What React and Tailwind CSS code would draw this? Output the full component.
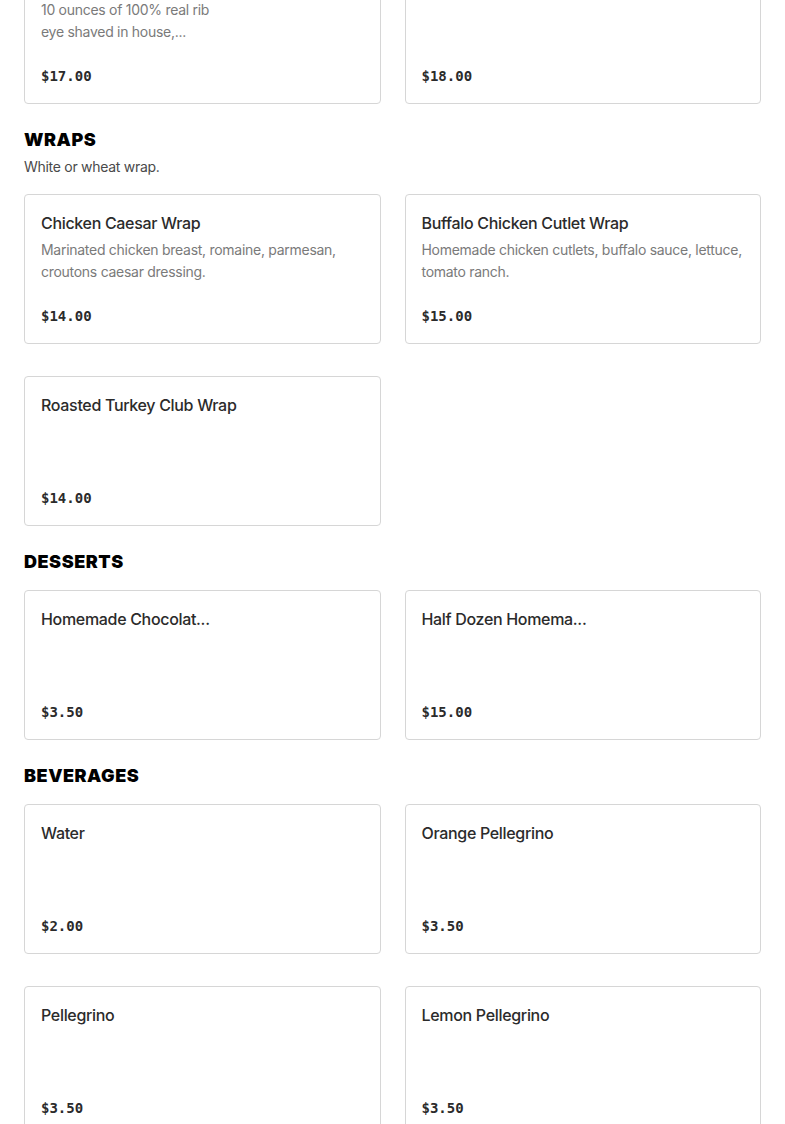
import React from "react";

const sections = [
  {
    name: null,
    items: [
      { title: "", desc: "10 ounces of 100% real rib eye shaved in house,...", price: "$17.00", narrow: true },
      { title: "", desc: "", price: "$18.00" },
    ],
  },
  {
    name: "WRAPS",
    desc: "White or wheat wrap.",
    items: [
      { title: "Chicken Caesar Wrap", desc: "Marinated chicken breast, romaine, parmesan, croutons caesar dressing.", price: "$14.00" },
      { title: "Buffalo Chicken Cutlet Wrap", desc: "Homemade chicken cutlets, buffalo sauce, lettuce, tomato ranch.", price: "$15.00" },
      { title: "Roasted Turkey Club Wrap", desc: "", price: "$14.00" },
    ],
  },
  {
    name: "DESSERTS",
    items: [
      { title: "Homemade Chocolat...", desc: "", price: "$3.50" },
      { title: "Half Dozen Homema...", desc: "", price: "$15.00" },
    ],
  },
  {
    name: "BEVERAGES",
    items: [
      { title: "Water", desc: "", price: "$2.00" },
      { title: "Orange Pellegrino", desc: "", price: "$3.50" },
      { title: "Pellegrino", desc: "", price: "$3.50" },
      { title: "Lemon Pellegrino", desc: "", price: "$3.50" },
    ],
  },
];

function Card({ item }) {
  return (
    <div className="h-[150px] rounded-[4px] border border-[#d6d6d6] bg-white px-4 pt-[17px] pb-[17px] flex flex-col justify-between">
      <div>
        <div className="text-[16px] leading-[22px] font-medium tracking-[-0.02em] text-[#2b2b2b] h-[22px]">
          {item.title}
        </div>
        {item.desc ? (
          <div
            className={`mt-[5px] text-[14px] leading-[22px] tracking-[-0.02em] text-[#7a7a7a] ${item.narrow ? "max-w-[176px]" : ""}`}
          >
            {item.desc}
          </div>
        ) : null}
      </div>
      <div className="text-[14px] leading-[20px] font-bold text-[#2b2b2b] [font-family:'DejaVu_Sans_Mono',monospace]">
        {item.price}
      </div>
    </div>
  );
}

export default function App() {
  return (
    <div className="w-[785px] h-[1124px] overflow-hidden bg-white [font-family:Inter,'Noto_Sans',sans-serif]">
      <div className="px-6 -mt-[46px]">
        {sections.map((s, i) => (
          <div key={i} className={s.name ? "mt-[24px]" : ""}>
            {s.name && (
              <div className="text-[18px] leading-[24px] font-black tracking-[0.03em] text-black">{s.name}</div>
            )}
            {s.desc && <div className="mt-1 text-[14px] leading-[22px] tracking-[-0.02em] text-[#4a4a4a]">{s.desc}</div>}
            <div className={`grid grid-cols-2 gap-x-6 gap-y-8 ${s.name ? "mt-[16px]" : ""}`}>
              {s.items.map((it, j) => (
                <Card key={j} item={it} />
              ))}
            </div>
          </div>
        ))}
      </div>
    </div>
  );
}
